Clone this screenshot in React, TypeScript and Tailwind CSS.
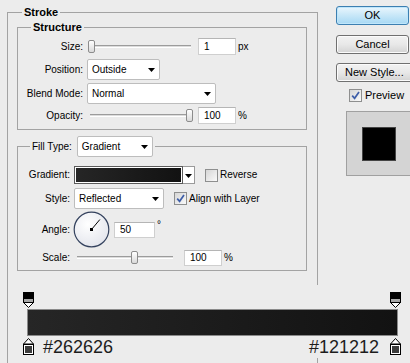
import React from "react";

function Dropdown({ className, text }: { className: string; text: string }) {
  return (
    <div className={`relative h-[21px] bg-white border border-[#bdbdbd] rounded-[2px] flex items-center pl-[4px] ${className}`}>
      <span>{text}</span>
      <svg className="absolute right-[4px] top-[8px]" width="7" height="4" viewBox="0 0 7 4">
        <polygon points="0,0 7,0 3.5,4" fill="#000" />
      </svg>
    </div>
  );
}

function Slider({ className, value }: { className: string; value: number }) {
  return (
    <div className={`relative h-[14px] ${className}`}>
      <div className="absolute left-[2px] right-[2px] top-[5px] h-[3px] border-t border-[#9c9c9c] border-b border-b-white bg-[#dcdcdc]" />
      <div
        className="absolute top-[0px] h-[13px] w-[7px] rounded-[2px] border border-[#8c8c8c] bg-gradient-to-b from-white to-[#d9d9d9]"
        style={{ left: `calc(${value}% - ${(value * 7) / 100}px)` }}
      />
    </div>
  );
}

function TextBox({ className, value }: { className: string; value: string }) {
  return (
    <div className={`bg-white border border-[#cfcfcf] border-t-[#b5b5b5] flex items-center pl-[5px] ${className}`}>
      {value}
    </div>
  );
}

function Checkbox({ checked }: { checked: boolean }) {
  return (
    <div className="w-[13px] h-[13px] border border-[#8e8f8f] bg-gradient-to-br from-[#d6d6d6] to-[#fafafa] flex items-center justify-center shrink-0">
      {checked && (
        <svg width="9" height="9" viewBox="0 0 9 9">
          <path d="M1.2 4.6 L3.6 7.3 L8 1" stroke="#3e5ea8" strokeWidth="1.7" fill="none" />
        </svg>
      )}
    </div>
  );
}

function TopStop() {
  return (
    <svg width="11" height="16" viewBox="0 0 11 16">
      <rect x="0.5" y="0.5" width="10" height="10" fill="#000" stroke="#000" />
      <rect x="1" y="7" width="9" height="3" fill="#a8a8a8" />
      <polygon points="0.5,10.5 10.5,10.5 5.5,15.5" fill="#fff" stroke="#000" />
    </svg>
  );
}

function BottomStop() {
  return (
    <svg width="11" height="17" viewBox="0 0 11 17">
      <polygon points="5.5,0.5 10.5,6 0.5,6" fill="#fff" stroke="#000" />
      <rect x="0.5" y="6.5" width="10" height="10" fill="#fff" stroke="#000" />
      <rect x="2" y="8" width="7" height="7" fill="#3c3c3c" />
    </svg>
  );
}

function AngleDial() {
  const a = (50 * Math.PI) / 180;
  const cx = 18.5;
  const cy = 18.5;
  const x2 = cx + 13 * Math.cos(a);
  const y2 = cy - 13 * Math.sin(a);
  return (
    <svg width="37" height="37" viewBox="0 0 37 37">
      <defs>
        <radialGradient id="dialg" cx="40%" cy="35%" r="70%">
          <stop offset="0%" stopColor="#ffffff" />
          <stop offset="100%" stopColor="#e3e5ec" />
        </radialGradient>
      </defs>
      <circle cx={cx} cy={cy} r="17.3" fill="url(#dialg)" stroke="#34425e" strokeWidth="1.2" />
      <line x1={cx} y1={cy} x2={x2} y2={y2} stroke="#000" strokeWidth="1" />
      <rect x={cx - 1.5} y={cy - 1.5} width="3" height="3" fill="#000" />
    </svg>
  );
}

export default function App() {
  return (
    <div className="w-[410px] h-[363px] overflow-hidden bg-[#ececec] flex text-black font-['Liberation_Sans',Arial,sans-serif] text-[10px] leading-[12px]">
      {/* Left: Stroke group */}
      <div className="pl-[7px] pt-[12px] shrink-0">
        <div className="relative w-[311px] h-[400px] border-l border-t border-r border-[#a3a3a3] px-[9px] pt-[14px]">
          <div className="absolute -top-[8px] left-[14px] px-[2px] bg-[#ececec] font-bold text-[11px] leading-[14px]">
            Stroke
          </div>

          {/* Structure */}
          <div className="relative w-[290px] h-[103px] border border-[#a3a3a3] pt-[10px]">
            <div className="absolute -top-[8px] left-[13px] px-[2px] bg-[#ececec] font-bold text-[11px] leading-[14px]">
              Structure
            </div>
            <div className="flex items-center h-[17px]">
              <div className="w-[65px] text-right">Size:</div>
              <Slider className="w-[105px] ml-[5px]" value={0} />
              <TextBox className="w-[38px] h-[17px] ml-[5px]" value="1" />
              <span className="ml-[2px]">px</span>
            </div>
            <div className="flex items-center h-[21px] mt-[4px]">
              <div className="w-[65px] text-right">Position:</div>
              <Dropdown className="w-[73px] ml-[4px]" text="Outside" />
            </div>
            <div className="flex items-center h-[21px] mt-[3px]">
              <div className="w-[65px] text-right">Blend Mode:</div>
              <Dropdown className="w-[129px] ml-[4px]" text="Normal" />
            </div>
            <div className="flex items-center h-[17px] mt-[3px]">
              <div className="w-[65px] text-right">Opacity:</div>
              <Slider className="w-[105px] ml-[5px]" value={100} />
              <TextBox className="w-[38px] h-[17px] ml-[5px]" value="100" />
              <span className="ml-[2px]">%</span>
            </div>
          </div>

          {/* Fill */}
          <div className="relative w-[290px] h-[125px] border border-[#a3a3a3] mt-[16px] pt-[19px]">
            <div className="absolute -top-[11px] left-[12px] px-[2px] bg-[#ececec] flex items-center h-[21px]">
              <span>Fill Type:</span>
              <Dropdown className="w-[76px] ml-[5px]" text="Gradient" />
            </div>
            <div className="flex items-center h-[18px]">
              <div className="w-[52px] text-right">Gradient:</div>
              <div className="ml-[4px] flex h-[18px]">
                <div className="w-[109px] h-[18px] border border-[#5a5a5a] p-[1px] bg-white">
                  <div className="w-full h-full bg-gradient-to-r from-[#262626] to-[#121212]" />
                </div>
                <div className="w-[12px] h-[18px] border border-l-0 border-[#9a9a9a] bg-white relative">
                  <svg className="absolute left-[2px] top-[7px]" width="7" height="4" viewBox="0 0 7 4">
                    <polygon points="0,0 7,0 3.5,4" fill="#000" />
                  </svg>
                </div>
              </div>
              <div className="ml-[10px]">
                <Checkbox checked={false} />
              </div>
              <span className="ml-[2px]">Reverse</span>
            </div>
            <div className="flex items-center h-[21px] mt-[4px]">
              <div className="w-[52px] text-right">Style:</div>
              <Dropdown className="w-[90px] ml-[4px]" text="Reflected" />
              <div className="ml-[10px]">
                <Checkbox checked={true} />
              </div>
              <span className="ml-[2px]">Align with Layer</span>
            </div>
            <div className="flex items-center h-[37px] mt-[2px]">
              <div className="w-[52px] text-right">Angle:</div>
              <div className="ml-[3px] w-[37px] h-[37px]">
                <AngleDial />
              </div>
              <TextBox className="w-[41px] h-[16px] ml-[4px]" value="50" />
              <span className="ml-[2px] self-start mt-[8px]">°</span>
            </div>
            <div className="flex items-center h-[16px] mt-[2px]">
              <div className="w-[52px] text-right">Scale:</div>
              <Slider className="w-[100px] ml-[5px]" value={60} />
              <TextBox className="w-[38px] h-[16px] ml-[9px]" value="100" />
              <span className="ml-[2px]">%</span>
            </div>
          </div>

          {/* Gradient editor */}
          <div className="mt-[14px] -ml-[5px] w-[393px] h-[73px] bg-[#ececec] pl-[11px] pt-[7px]">
            <div className="flex justify-between w-[378px] h-[16px]">
              <TopStop />
              <TopStop />
            </div>
            <div className="ml-[4px] mt-[1px] w-[371px] h-[27px] border border-[#8a8a8a] bg-gradient-to-r from-[#262626] to-[#121212]" />
            <div className="flex justify-between w-[378px] mt-[2px] h-[17px]">
              <div className="flex items-end">
                <BottomStop />
                <span className="ml-[9px] text-[18px] leading-[18px] text-[#1c1c1c] -mb-[1px]">#262626</span>
              </div>
              <div className="flex items-end">
                <span className="mr-[11px] text-[18px] leading-[18px] text-[#1c1c1c] -mb-[1px]">#121212</span>
                <BottomStop />
              </div>
            </div>
          </div>
        </div>
      </div>

      {/* Right column */}
      <div className="ml-[18px] pt-[6px] flex flex-col shrink-0 text-[11px] leading-[13px]">
        <div className="w-[73px] h-[19px] rounded-[3px] border border-[#3c7fb1] bg-gradient-to-b from-[#eaf6fd] via-[#c7e7f8] to-[#a6d8f4] shadow-[inset_0_0_0_1px_#bfe6fb] flex items-center justify-center">
          OK
        </div>
        <div className="mt-[10px] w-[73px] h-[19px] rounded-[3px] border border-[#707070] bg-gradient-to-b from-[#f2f2f2] via-[#e8e8e8] to-[#d3d3d3] shadow-[inset_0_0_0_1px_#fbfbfb] flex items-center justify-center">
          Cancel
        </div>
        <div className="mt-[9px] w-[82px] h-[19px] rounded-[3px] border border-[#707070] bg-gradient-to-b from-[#f2f2f2] via-[#e8e8e8] to-[#d3d3d3] shadow-[inset_0_0_0_1px_#fbfbfb] flex items-center pl-[8px]">
          New Style...
        </div>
        <div className="mt-[7px] ml-[13px] flex items-center h-[13px]">
          <Checkbox checked={true} />
          <span className="ml-[3px]">Preview</span>
        </div>
        <div className="mt-[9px] ml-[10px] w-[70px] h-[65px] border border-[#a0a0a0] bg-[#d4d4d4] pl-[15px] pt-[15px]">
          <div className="w-[34px] h-[34px] bg-black border border-[#444]" />
        </div>
      </div>
    </div>
  );
}
